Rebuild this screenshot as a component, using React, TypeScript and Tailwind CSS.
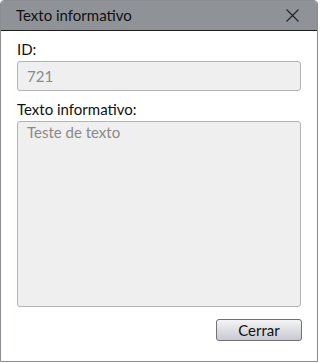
const font = { fontFamily: '"Segoe UI", Lato, "Noto Sans", sans-serif' };

export default function App() {
  return (
    <div className="w-[320px] h-[363px] bg-white" style={font}>
      <div className="w-[318px] h-[362px] flex flex-col border border-[#8a8d92] rounded-t-[4px] overflow-hidden bg-white">
        <div className="h-[30px] shrink-0 flex items-center justify-between bg-[#8f9297] border-b border-[#1d1d1d] pl-[15px] pr-[18px]">
          <span className="text-[15px] text-[#111] leading-none">Texto informativo</span>
          <svg width="13" height="13" viewBox="0 0 13 13" className="text-[#222]">
            <path d="M0.5 0.5 L12.5 12.5 M12.5 0.5 L0.5 12.5" stroke="currentColor" strokeWidth="1.1" />
          </svg>
        </div>
        <div className="flex-1 flex flex-col px-[16px] pt-[9px] pb-[20px]">
          <label className="text-[15px] text-[#111] leading-[18px]">ID:</label>
          <div className="mt-[3px] h-[30px] rounded-[3px] border border-[#b4b4b4] bg-[#efefef] flex items-center px-[9px] text-[15px] text-[#8a8a8a]">
            721
          </div>
          <label className="mt-[9px] text-[15px] text-[#111] leading-[18px]">Texto informativo:</label>
          <div className="mt-[3px] flex-1 rounded-[3px] border border-[#b4b4b4] bg-[#efefef] px-[9px] pt-[1px] text-[15px] leading-[18px] text-[#8a8a8a]">
            Teste de texto
          </div>
          <div className="flex justify-end mt-[12px] -mr-[1px]">
            <button className="w-[86px] h-[22px] rounded-[3px] border border-[#707070] bg-gradient-to-b from-[#f4f4f6] to-[#c9cad0] text-[15px] text-[#111] leading-none">
              Cerrar
            </button>
          </div>
        </div>
      </div>
    </div>
  );
}
